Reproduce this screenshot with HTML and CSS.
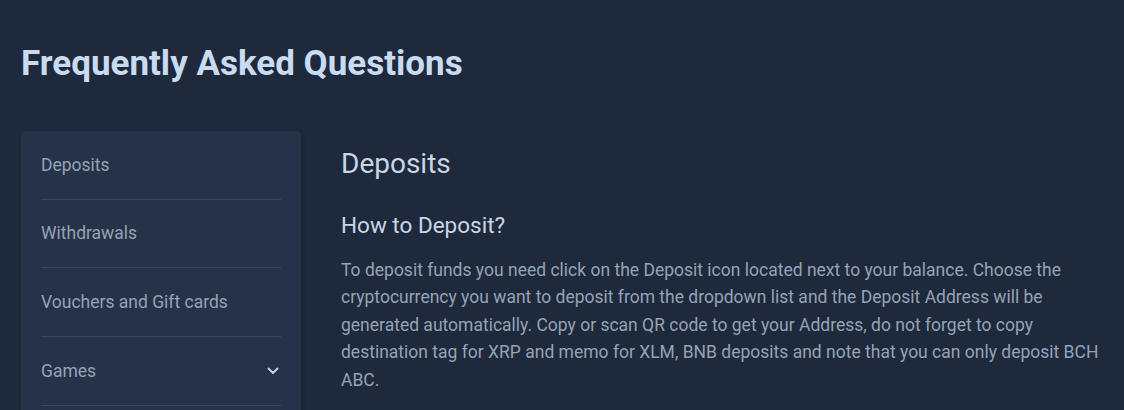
FILE: index.html
```html
<!DOCTYPE html>
<html>
<head>
<meta charset="utf-8">
<link rel="stylesheet" href="styles.css">
</head>
<body>
<div class="page">
  <h1 class="page-title">Frequently Asked Questions</h1>
  <div class="layout">
    <nav class="sidebar">
      <div class="nav-item">Deposits</div>
      <div class="nav-item">Withdrawals</div>
      <div class="nav-item">Vouchers and Gift cards</div>
      <div class="nav-item">Games
        <svg class="chevron" width="12" height="8" viewBox="0 0 12 8"><path d="M1.5 1.5 L6 6 L10.5 1.5" fill="none" stroke="#c3cede" stroke-width="2" stroke-linecap="round" stroke-linejoin="round"/></svg>
      </div>
    </nav>
    <main class="content">
      <h2 class="section-title">Deposits</h2>
      <h3 class="question">How to Deposit?</h3>
      <p class="answer">To deposit funds you need click on the Deposit icon located next to your balance. Choose the cryptocurrency you want to deposit from the dropdown list and the Deposit Address will be generated automatically. Copy or scan QR code to get your Address, do not forget to copy destination tag for XRP and memo for XLM, BNB deposits and note that you can only deposit BCH ABC.</p>
    </main>
  </div>
</div>
</body>
</html>
```
FILE: styles.css
```css
html, body {
  margin: 0;
  padding: 0;
  background: #1e293b;
  font-family: Roboto, "Liberation Sans", sans-serif;
}
.page {
  padding: 44px 21px 0 21px;
}
.page-title {
  margin: 0;
  font-size: 35px;
  font-weight: 700;
  line-height: 40px;
  color: #c9dbf1;
}
.layout {
  display: flex;
  gap: 40px;
  margin-top: 47px;
  align-items: flex-start;
}
.sidebar {
  width: 280px;
  flex: none;
  min-height: 320px;
  background: #253247;
  border-radius: 4px;
  padding: 0 20px;
  box-sizing: border-box;
  box-shadow: 2px 0 4px rgba(0,0,0,0.12);
}
.nav-item {
  display: flex;
  align-items: center;
  justify-content: space-between;
  height: 67.67px;
  border-bottom: 1px solid #3a475b;
  font-size: 17.5px;
  color: #94a3b8;
}
.chevron {
  margin-right: 2px;
}
.content {
  flex: 1;
  min-width: 0;
  padding-top: 15.7px;
}
.section-title {
  margin: 0;
  font-size: 28px;
  font-weight: 400;
  line-height: 34px;
  color: #c8d6e8;
}
.question {
  margin: 30.3px 0 0 0;
  font-size: 22.5px;
  font-weight: 400;
  line-height: 28px;
  color: #c8d6e8;
}
.answer {
  margin: 18px 0 0 0;
  font-size: 17.5px;
  line-height: 27.5px;
  color: #94a3b8;
}
```
